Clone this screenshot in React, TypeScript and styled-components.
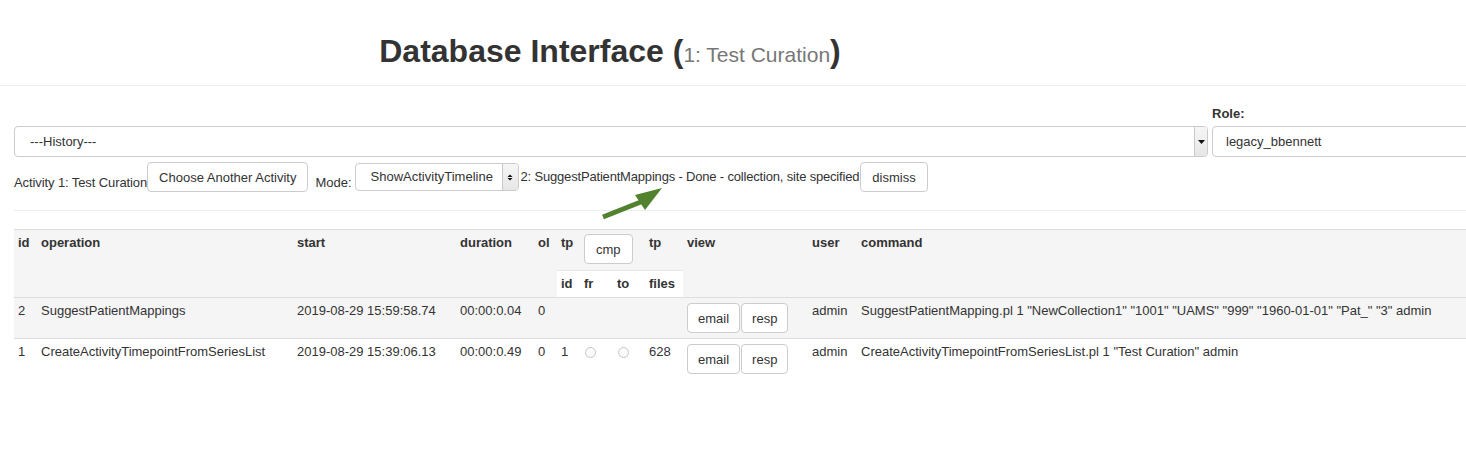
import styled, { createGlobalStyle } from 'styled-components';

const GlobalStyle = createGlobalStyle`
  html, body {
    margin: 0;
    padding: 0;
    background: #fff;
    overflow: hidden;
  }
  body {
    font-family: "Liberation Sans", Arial, Helvetica, sans-serif;
    font-size: 13px;
    line-height: 18px;
    color: #333;
  }
`;

type TStep = {
  id: number;
  operation: string;
  start: string;
  duration: string;
  ol: number;
  tpId?: number;
  tpFiles?: number;
  user: string;
  command: string;
};

const steps: TStep[] = [
  {
    id: 2,
    operation: 'SuggestPatientMappings',
    start: '2019-08-29 15:59:58.74',
    duration: '00:00:0.04',
    ol: 0,
    user: 'admin',
    command:
      'SuggestPatientMapping.pl 1 "NewCollection1" "1001" "UAMS" "999" "1960-01-01" "Pat_" "3" admin',
  },
  {
    id: 1,
    operation: 'CreateActivityTimepointFromSeriesList',
    start: '2019-08-29 15:39:06.13',
    duration: '00:00:0.49',
    ol: 0,
    tpId: 1,
    tpFiles: 628,
    user: 'admin',
    command: 'CreateActivityTimepointFromSeriesList.pl 1 "Test Curation" admin',
  },
];

const columnWidths = [23, 256, 163, 78, 23, 23, 33, 32, 38, 125, 49];

function DownCaret() {
  return (
    <svg width="7" height="4" viewBox="0 0 7 4">
      <path d="M0 0 L7 0 L3.5 4 Z" fill="#111" />
    </svg>
  );
}

function UpDownCaret() {
  return (
    <svg width="6" height="7" viewBox="0 0 6 7">
      <path d="M0.5 3 L3 0.5 L5.5 3 Z" fill="#111" />
      <path d="M0.5 4 L3 6.5 L5.5 4 Z" fill="#111" />
    </svg>
  );
}

export default function App() {
  return (
    <Page>
      <GlobalStyle />

      <Header>
        <Title>
          Database Interface (<Subtitle>1: Test Curation</Subtitle>)
        </Title>
        <HeaderAside />
      </Header>

      <Controls>
        <TopRow>
          <HistoryField>
            <SelectBox $height={31}>
              <SelectValue $pad={15}>---History---</SelectValue>
              <SelectArrow $width={12}>
                <DownCaret />
              </SelectArrow>
            </SelectBox>
          </HistoryField>
          <RoleField>
            <FieldLabel>Role:</FieldLabel>
            <SelectBox $height={31}>
              <SelectValue $pad={13}>legacy_bbennett</SelectValue>
            </SelectBox>
          </RoleField>
        </TopRow>

        <ActivityRow>
          <InlineText $bottom>Activity 1: Test Curation</InlineText>
          <Button>Choose Another Activity</Button>
          <ModeLabel>Mode:</ModeLabel>
          <ModeSelect $height={28}>
            <SelectValue $pad={15}>ShowActivityTimeline</SelectValue>
            <SelectArrow $width={15}>
              <UpDownCaret />
            </SelectArrow>
          </ModeSelect>
          <StatusText>
            2: SuggestPatientMappings - Done - collection, site specified
          </StatusText>
          <DismissButton>dismiss</DismissButton>
        </ActivityRow>
      </Controls>

      <Divider />

      <Timeline>
        <colgroup>
          {columnWidths.map((w, i) => (
            <col key={i} style={{ width: w }} />
          ))}
          <col />
        </colgroup>
        <thead>
          <tr>
            <HeadCell rowSpan={2}>id</HeadCell>
            <HeadCell rowSpan={2}>operation</HeadCell>
            <HeadCell rowSpan={2}>start</HeadCell>
            <HeadCell rowSpan={2}>duration</HeadCell>
            <HeadCell rowSpan={2}>ol</HeadCell>
            <HeadCell>tp</HeadCell>
            <HeadCell colSpan={2}>
              <Button>cmp</Button>
            </HeadCell>
            <HeadCell>tp</HeadCell>
            <HeadCell rowSpan={2}>view</HeadCell>
            <HeadCell rowSpan={2}>user</HeadCell>
            <HeadCell rowSpan={2}>command</HeadCell>
          </tr>
          <tr>
            <SubHeadCell>id</SubHeadCell>
            <SubHeadCell>fr</SubHeadCell>
            <SubHeadCell>to</SubHeadCell>
            <SubHeadCell>files</SubHeadCell>
          </tr>
        </thead>
        <tbody>
          {steps.map((step, index) => (
            <StepRow key={step.id} $shaded={index % 2 === 0}>
              <Cell>{step.id}</Cell>
              <Cell>{step.operation}</Cell>
              <Cell>{step.start}</Cell>
              <Cell>{step.duration}</Cell>
              <Cell>{step.ol}</Cell>
              <Cell>{step.tpId ?? ''}</Cell>
              <Cell>{step.tpId !== undefined && <Radio />}</Cell>
              <Cell>{step.tpId !== undefined && <Radio />}</Cell>
              <Cell>{step.tpFiles ?? ''}</Cell>
              <Cell>
                <ButtonPair>
                  <SmallButton>email</SmallButton>
                  <SmallButton>resp</SmallButton>
                </ButtonPair>
              </Cell>
              <Cell>{step.user}</Cell>
              <Cell>{step.command}</Cell>
            </StepRow>
          ))}
        </tbody>
      </Timeline>

      <PointerArrow width="75" height="40" viewBox="0 0 75 40">
        <line x1="8" y1="35" x2="47" y2="19.5" stroke="#53822f" strokeWidth="5" />
        <polygon points="67,6 40,13 50,28" fill="#53822f" />
      </PointerArrow>
    </Page>
  );
}

const Page = styled.div`
  position: relative;
  width: 1490px;
`;

const Header = styled.div`
  display: flex;
  height: 86px;
  box-sizing: border-box;
  padding-top: 34px;
  border-bottom: 1px solid #eee;
`;

const Title = styled.h1`
  flex: 1;
  margin: 0;
  text-align: center;
  font-size: 32px;
  line-height: 34px;
  font-weight: bold;
  color: #333;
`;

const Subtitle = styled.span`
  font-size: 21px;
  line-height: 1;
  font-weight: normal;
  color: #777;
`;

const HeaderAside = styled.div`
  width: 270px;
`;

const Controls = styled.div`
  padding: 19px 0 0 14px;
`;

const TopRow = styled.div`
  display: flex;
  align-items: flex-end;
  gap: 4px;
`;

const HistoryField = styled.div`
  flex: 1;
`;

const RoleField = styled.div`
  width: 278px;
  display: flex;
  flex-direction: column;
`;

const FieldLabel = styled.label`
  display: block;
  font-weight: bold;
  margin-bottom: 3px;
`;

const SelectBox = styled.div<{ $height: number }>`
  box-sizing: border-box;
  display: flex;
  height: ${({ $height }) => $height}px;
  border: 1px solid #ccc;
  border-radius: 4px;
  background: #fff;
  overflow: hidden;
`;

const ModeSelect = styled(SelectBox)`
  width: 164px;
`;

const SelectValue = styled.div<{ $pad: number }>`
  flex: 1;
  display: flex;
  align-items: center;
  padding-left: ${({ $pad }) => $pad}px;
  white-space: nowrap;
  color: #333;
`;

const SelectArrow = styled.div<{ $width: number }>`
  width: ${({ $width }) => $width}px;
  display: flex;
  align-items: center;
  justify-content: center;
  border-left: 1px solid #c8c8c8;
  background: linear-gradient(#f6f6f6, #e6e6e6);
`;

const ActivityRow = styled.div`
  display: flex;
  align-items: center;
  height: 30px;
  margin-top: 5px;
`;

const InlineText = styled.span<{ $bottom?: boolean }>`
  align-self: ${({ $bottom }) => ($bottom ? 'flex-end' : 'center')};
  white-space: nowrap;
  letter-spacing: -0.1px;
`;

const ModeLabel = styled.span`
  align-self: flex-end;
  margin: 0 3px 0 7px;
`;

const StatusText = styled.span`
  margin-left: 2px;
  white-space: nowrap;
  letter-spacing: -0.18px;
`;

const Button = styled.button`
  box-sizing: border-box;
  height: 30px;
  padding: 0 11px;
  border: 1px solid #ccc;
  border-radius: 4px;
  background: #fff;
  font-family: inherit;
  font-size: 13px;
  color: #333;
  white-space: nowrap;
`;

const SmallButton = styled(Button)`
  padding: 0 10px;
`;

const DismissButton = styled(Button)`
  margin-left: 1px;
`;

const Divider = styled.div`
  margin: 18px 0 0 14px;
  border-top: 1px solid #eee;
`;

const Timeline = styled.table`
  margin: 18px 0 0 14px;
  width: 1476px;
  table-layout: fixed;
  border-collapse: separate;
  border-spacing: 0;
`;

const HeadCell = styled.th`
  padding: 4px 4px 6px;
  border-top: 1px solid #ddd;
  background: #f5f5f5;
  text-align: left;
  vertical-align: top;
  font-weight: bold;
  white-space: nowrap;
`;

const SubHeadCell = styled(HeadCell)`
  padding: 4px;
  border-top-color: #e6e6e6;
  background: #fff;
`;

const StepRow = styled.tr<{ $shaded: boolean }>`
  background: ${({ $shaded }) => ($shaded ? '#f5f5f5' : '#fff')};
`;

const Cell = styled.td`
  padding: 4px 4px 5px;
  border-top: 1px solid #ddd;
  vertical-align: top;
  white-space: nowrap;
`;

const ButtonPair = styled.div`
  display: flex;
  gap: 1px;
  margin-top: 1px;
`;

const Radio = styled.span`
  display: block;
  box-sizing: border-box;
  width: 11px;
  height: 11px;
  margin: 4px 0 0 1px;
  border: 1px solid #c6c6c6;
  border-radius: 50%;
  background: #fbfbfb;
`;

const PointerArrow = styled.svg`
  position: absolute;
  left: 595px;
  top: 182px;
  pointer-events: none;
`;
